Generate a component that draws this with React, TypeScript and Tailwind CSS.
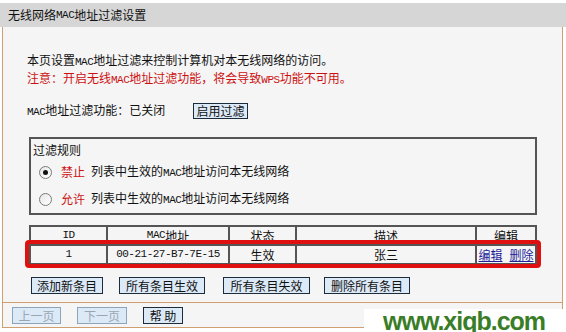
import React from "react";

const L = ({ children }: { children: React.ReactNode }) => (
  <span className="font-['Liberation_Mono',monospace] text-[11px] tracking-[-0.5px]">{children}</span>
);

const Radio = ({ checked }: { checked?: boolean }) => (
  <span className="flex h-[13px] w-[13px] items-center justify-center rounded-full border border-[#7a7a7a] bg-gradient-to-br from-[#e6e6e6] to-white">
    {checked ? <span className="h-[5px] w-[5px] rounded-full bg-[#111]" /> : null}
  </span>
);

const Btn = ({ children, w, ml, disabled }: { children: React.ReactNode; w: string; ml: string; disabled?: boolean }) => (
  <div
    className={`${w} ${ml} flex h-[17px] items-center justify-center border bg-[#dce9f7] text-[12px] leading-none ${
      disabled ? "border-[#8ea4bb] text-[#9aa7b3]" : "border-[#1c2c3c] text-[#111]"
    }`}
  >
    {children}
  </div>
);

export default function App() {
  return (
    <div className="relative h-[332px] w-[566px] overflow-hidden bg-white font-['Noto_Sans_CJK_SC',sans-serif] text-[12px] text-[#111]">
      <div className="mt-[3px] flex h-[24px] items-center bg-[#d6d6d6] pl-[8px] leading-none">
        无线网络<L>MAC</L>地址过滤设置
      </div>
      <div className="ml-[2px] w-[561px] border-x border-b border-[#cf9f6f] bg-[#f5f5f5]">
        <div className="h-[275px] pl-[24px] pt-[24px]">
          <div className="h-[18px] leading-[18px]">
            本页设置<L>MAC</L>地址过滤来控制计算机对本无线网络的访问。
          </div>
          <div className="h-[18px] leading-[18px] text-[#cc1111]">
            注意：开启无线<L>MAC</L>地址过滤功能，将会导致<L>WPS</L>功能不可用。
          </div>
          <div className="mt-[15px] flex h-[18px] items-center">
            <div className="w-[166px] leading-[18px]">
              <L>MAC</L>地址过滤功能：已关闭
            </div>
            <div className="flex h-[16px] w-[55px] items-center justify-center border border-[#1c2c3c] bg-[#dce9f7] leading-none">
              启用过滤
            </div>
          </div>
          <div className="ml-[2px] mt-[17px] h-[78px] w-[508px] border-2 border-[#555] pl-[2px] pt-[2px]">
            <div className="h-[18px] leading-[18px]">过滤规则</div>
            <div className="mt-[4px] flex h-[18px] items-center pl-[6px]">
              <Radio checked />
              <span className="ml-[9px] text-[#cc1111]">禁止</span>
              <span className="ml-[6px]">
                列表中生效的<L>MAC</L>地址访问本无线网络
              </span>
            </div>
            <div className="mt-[9px] flex h-[18px] items-center pl-[6px]">
              <Radio />
              <span className="ml-[9px] text-[#cc1111]">允许</span>
              <span className="ml-[6px]">
                列表中生效的<L>MAC</L>地址访问本无线网络
              </span>
            </div>
          </div>
          <div className="relative ml-[2px] mt-[10px] w-[508px]">
            <div className="grid grid-cols-[75px_120px_65px_178px_58px] grid-rows-[17px_17px] gap-[2px] bg-[#555] p-[2px]">
              <div className="flex items-center justify-center bg-[#f5f5f5]"><L>ID</L></div>
              <div className="flex items-center justify-center bg-[#f5f5f5]"><L>MAC</L>地址</div>
              <div className="flex items-center justify-center bg-[#f5f5f5]">状态</div>
              <div className="flex items-center justify-center bg-[#f5f5f5]">描述</div>
              <div className="flex items-center justify-center bg-[#f5f5f5]">编辑</div>
              <div className="flex items-center justify-center bg-[#f5f5f5]"><L>1</L></div>
              <div className="flex items-center justify-center bg-[#f5f5f5]"><L>00-21-27-B7-7E-15</L></div>
              <div className="flex items-center justify-center bg-[#f5f5f5]">生效</div>
              <div className="flex items-center justify-center bg-[#f5f5f5]">张三</div>
              <div className="flex items-center justify-center gap-[7px] bg-[#f5f5f5] text-[#1f1f99]">
                <span className="underline">编辑</span>
                <span className="underline">删除</span>
              </div>
            </div>
            <div className="absolute left-[-4px] top-[15px] h-[28px] w-[516px] rounded-[4px] border-4 border-[#e01010]" />
          </div>
          <div className="mt-[12px] flex">
            <Btn w="w-[72px]" ml="ml-[4px]">添加新条目</Btn>
            <Btn w="w-[86px]" ml="ml-[16px]">所有条目生效</Btn>
            <Btn w="w-[87px]" ml="ml-[18px]">所有条目失效</Btn>
            <Btn w="w-[86px]" ml="ml-[14px]">删除所有条目</Btn>
          </div>
        </div>
        <div className="flex h-[25px] border-t border-[#cf9f6f] pt-[4px]">
          <Btn w="w-[49px]" ml="ml-[9px]" disabled>上一页</Btn>
          <Btn w="w-[50px]" ml="ml-[16px]" disabled>下一页</Btn>
          <Btn w="w-[40px]" ml="ml-[16px]">帮 助</Btn>
        </div>
      </div>
      <div className="absolute left-[364px] top-[309px] flex h-[23px] w-[202px] items-start bg-white pl-[19px]">
        <span className="font-['Liberation_Sans',Arial,sans-serif] text-[25px] font-bold leading-[25px] tracking-[-1px] text-[#3a7d27]">
          www.xiqb.com
        </span>
      </div>
    </div>
  );
}
